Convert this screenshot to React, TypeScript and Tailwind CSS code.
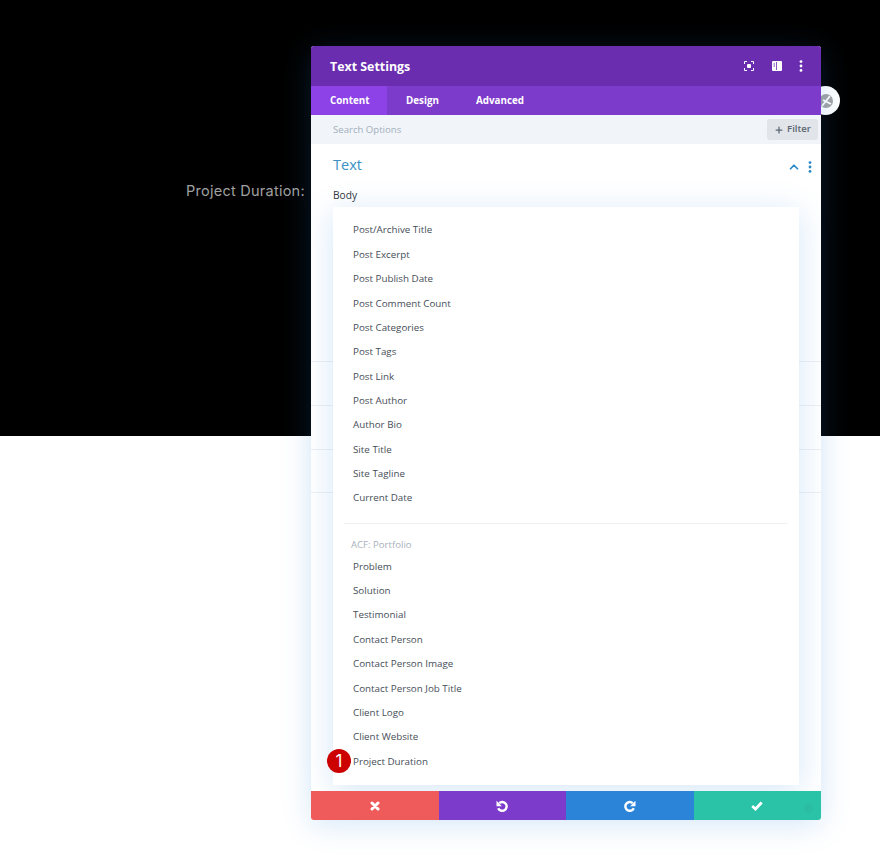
import React from 'react';
import { Plus, ChevronUp } from 'lucide-react';

const POST_ITEMS = [
  'Post/Archive Title',
  'Post Excerpt',
  'Post Publish Date',
  'Post Comment Count',
  'Post Categories',
  'Post Tags',
  'Post Link',
  'Post Author',
  'Author Bio',
  'Site Title',
  'Site Tagline',
  'Current Date',
];

const ACF_ITEMS = [
  'Problem',
  'Solution',
  'Testimonial',
  'Contact Person',
  'Contact Person Image',
  'Contact Person Job Title',
  'Client Logo',
  'Client Website',
  'Project Duration',
];

const FONT = "font-['Open_Sans','Noto_Sans',sans-serif]";

function Dots({ className }: { className: string }) {
  return (
    <svg width="4" height="12" viewBox="0 0 4 12" className={className} fill="currentColor">
      <circle cx="2" cy="1.6" r="1.4" />
      <circle cx="2" cy="6" r="1.4" />
      <circle cx="2" cy="10.4" r="1.4" />
    </svg>
  );
}

function FocusIcon() {
  return (
    <svg width="10" height="10" viewBox="0 0 10 10" fill="none" stroke="currentColor" strokeWidth="1">
      <path d="M.5 3V.5H3M7 .5h2.500V3M9.500 7v2.500H7M3 9.500H.5V7" />
      <rect x="3" y="3" width="4" height="4" fill="currentColor" stroke="none" rx="1" />
    </svg>
  );
}

function SplitIcon() {
  return (
    <svg width="10" height="10" viewBox="0 0 10 10" fill="currentColor">
      <path
        fillRule="evenodd"
        d="M1 0h8a1 1 0 0 1 1 1v8a1 1 0 0 1-1 1H1a1 1 0 0 1-1-1V1a1 1 0 0 1 1-1zm3 1v8h.8V1zM1.500 2.500v1h1.500v-1zm0 2v1h1.500v-1z"
      />
    </svg>
  );
}

function CloseIcon() {
  return (
    <svg width="10" height="10" viewBox="0 0 10 10" stroke="currentColor" strokeWidth="3" strokeLinecap="round">
      <path d="M2 2l6 6M8 2l-6 6" />
    </svg>
  );
}

function UndoIcon({ flip }: { flip?: boolean }) {
  return (
    <svg width="12" height="12" viewBox="0 0 12 12" className={flip ? '-scale-x-100' : ''}>
      <path d="M3.200 3.200A4.400 4.400 0 1 1 2.200 8.200" fill="none" stroke="currentColor" strokeWidth="2.400" />
      <path d="M.5 .8V6.200H5.900z" fill="currentColor" />
    </svg>
  );
}

function CheckIcon() {
  return (
    <svg width="12" height="10" viewBox="0 0 12 10" fill="none" stroke="currentColor" strokeWidth="2.800">
      <path d="M1.200 5l3.300 3 6.200-6.500" />
    </svg>
  );
}

function MenuItem({ label }: { label: string }) {
  return (
    <div className="h-[24.36px] pl-5 flex items-center text-[9.8px] font-medium text-[#464d58]">
      {label}
    </div>
  );
}

export default function App() {
  return (
    <div className={`relative h-[866px] w-full overflow-hidden bg-white ${FONT}`}>
      {/* Page behind the modal */}
      <div className="h-[436px] bg-black pl-[186px] pt-[181px]">
        <p className="text-[14.5px] leading-[20px] text-[#a0a0a0] font-['Inter',sans-serif] tracking-[0.25px]">
          Project Duration:
        </p>
      </div>

      {/* Module handle peeking out from behind the modal */}
      <div className="absolute left-[811px] top-[86px] w-[29px] h-[29px] rounded-full bg-white flex items-center justify-center">
        <div className="ml-[1px] w-[14px] h-[14px] rounded-full bg-[#a3a3a3] overflow-hidden">
          <svg width="14" height="14" viewBox="0 0 14 14" stroke="white" strokeWidth="1.800">
            <path d="M3 12 L11 2 M4 6 L12 10" />
          </svg>
        </div>
      </div>

      {/* Settings modal */}
      <div className="absolute left-[311px] top-[46px] w-[510px] h-[774px] flex flex-col bg-white rounded-[3px] shadow-[0_5px_30px_rgba(43,135,218,0.2)]">
        <div className="h-10 shrink-0 flex items-center pl-[19px] pr-[18px] bg-[#6a2db0] rounded-t-[3px] text-white">
          <h2 className="mt-[2px] text-[12.4px] font-bold flex-1">Text Settings</h2>
          <div className="flex items-center gap-[18px]">
            <FocusIcon />
            <SplitIcon />
            <Dots className="-ml-[1px]" />
          </div>
        </div>

        <div className="h-[29px] shrink-0 flex items-stretch bg-[#7d3bcb] text-white text-[9.8px] font-bold">
          <div className="w-[76px] pt-[2px] pl-[19px] flex items-center bg-[#8c42e6]">Content</div>
          <div className="ml-[19px] pt-[2px] w-[70px] flex items-center">Design</div>
          <div className="flex pt-[2px] items-center">Advanced</div>
        </div>

        <div className="h-[29px] shrink-0 flex items-center justify-between pl-[22px] pr-[3px] bg-[#f1f5f9]">
          <span className="pt-[1px] text-[9.6px] font-medium text-[#a3afbd]">Search Options</span>
          <div className="h-[21px] w-[51px] flex items-center justify-center gap-[3px] rounded-[3px] bg-[#e1e5ea] text-[9.6px] font-semibold text-[#5b6672]">
            <Plus size={10} strokeWidth={3} />
            Filter
          </div>
        </div>

        <div className="relative flex-1 min-h-0">
          <div className="h-[41px] flex items-center justify-between pl-[22px] pr-[9px] text-[#2b87c4]">
            <h3 className="text-[14.5px] text-[#3a8fc4]">Text</h3>
            <div className="mt-[5px] flex items-center gap-[7px]">
              <ChevronUp size={14} strokeWidth={3} />
              <Dots className="" />
            </div>
          </div>
          <div className="mt-[3px] pl-[22px] text-[10.2px] leading-[14px] font-medium text-[#32373c]">Body</div>

          {/* Collapsed option groups, mostly covered by the dropdown */}
          <div className="mt-[159px]">
            <div className="h-[44px] border-t border-[#edf0f4]" />
            <div className="h-[44px] border-t border-[#edf0f4]" />
            <div className="h-[43px] border-t border-[#edf0f4]" />
            <div className="h-[43px] border-t border-[#edf0f4]" />
          </div>

          {/* Dynamic content dropdown */}
          <div className="absolute left-[22px] top-[63px] w-[466px] h-[578px] pt-[11.6px] bg-white shadow-[0_5px_30px_rgba(43,135,218,0.2)]">
            {POST_ITEMS.map((label) => (
              <MenuItem key={label} label={label} />
            ))}
            <div className="mt-[12.4px] mx-[11px] border-t border-[#eef0f3]" />
            <div className="mt-[13px] mb-[2.6px] h-[15px] pl-[18px] flex items-center text-[9.6px] font-medium text-[#a9b1bb]">
              ACF: Portfolio
            </div>
            {ACF_ITEMS.map((label) => (
              <MenuItem key={label} label={label} />
            ))}
          </div>

          <div className="absolute left-[16px] top-[605px] w-6 h-6 rounded-full bg-[#cc0000] flex items-center justify-center text-white text-[17px] leading-none font-['Inter',sans-serif]">
            1
          </div>
        </div>

        <div className="relative h-[29px] shrink-0 grid grid-cols-4 text-white rounded-b-[3px] overflow-hidden">
          <div className="flex items-center justify-center bg-[#ef5a5a]">
            <CloseIcon />
          </div>
          <div className="flex items-center justify-center bg-[#7d3bcb]">
            <UndoIcon />
          </div>
          <div className="flex items-center justify-center bg-[#2b84d8]">
            <UndoIcon flip />
          </div>
          <div className="flex items-center justify-center bg-[#2bc3a8]">
            <CheckIcon />
          </div>
          <div className="absolute right-[8px] top-[13px] w-[9px] h-[9px] rounded-full bg-[#2abda4]" />
        </div>
      </div>
    </div>
  );
}
